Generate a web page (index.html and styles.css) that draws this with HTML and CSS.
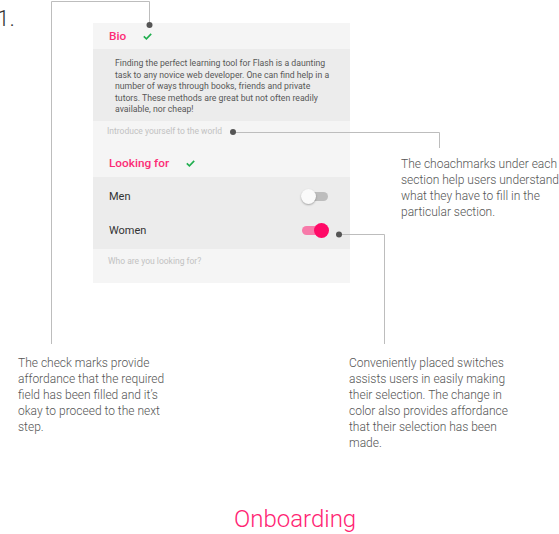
FILE: index.html
```html
<!DOCTYPE html>
<html lang="en">
<head>
<meta charset="utf-8">
<title>Onboarding</title>
<link rel="stylesheet" href="styles.css">
</head>
<body>
<div class="stage">
  <div class="top">
    <div class="num">1.</div>
    <section class="card">
      <div class="sec-head sec-head--bio">
        <span class="sec-title">Bio</span>
        <svg class="check" width="9" height="7" viewBox="0 0 9 7"><polyline points="0.8,3.4 3.4,5.8 8.2,0.9" fill="none" stroke="#1fae4e" stroke-width="1.6"/></svg>
      </div>
      <div class="bio-body">
        <p>Finding the perfect learning tool for Flash is a daunting<br>task to any novice web developer. One can find help in a<br>number of ways through books, friends and private<br>tutors. These methods are great but not often readily<br>available, nor cheap!</p>
      </div>
      <div class="coach coach--bio">Introduce yourself to the world</div>
      <div class="sec-head sec-head--look">
        <span class="sec-title">Looking for</span>
        <svg class="check" width="9" height="7" viewBox="0 0 9 7"><polyline points="0.8,3.4 3.4,5.8 8.2,0.9" fill="none" stroke="#1fae4e" stroke-width="1.6"/></svg>
      </div>
      <div class="options">
        <div class="option"><span class="option-label">Men</span><span class="switch"></span></div>
        <div class="option"><span class="option-label">Women</span><span class="switch switch--on"></span></div>
      </div>
      <div class="coach coach--look">Who are you looking for?</div>
    </section>
    <p class="note note--coach">The choachmarks under each<br>section help users understand<br>what they have to fill in the<br>particular section.</p>
  </div>
  <div class="bottom">
    <p class="note note--check">The check marks provide<br>affordance that the required<br>field has been filled and it’s<br>okay to proceed to the next<br>step.</p>
    <p class="note note--switch">Conveniently placed switches<br>assists users in easily making<br>their selection. The change in<br>color also provides affordance<br>that their selection has been<br>made.</p>
  </div>
  <h1 class="title">Onboarding</h1>
  <svg class="connectors" width="559" height="534" viewBox="0 0 559 534">
    <path d="M51.5 344 V1.5 H149.5 V25" fill="none" stroke="#bdbdbd" stroke-width="1"/>
    <circle cx="149.5" cy="25" r="3" fill="#555"/>
    <path d="M233 132.5 H439.5 V148" fill="none" stroke="#bdbdbd" stroke-width="1"/>
    <circle cx="233" cy="132" r="3" fill="#555"/>
    <path d="M339 234.5 H384.5 V344" fill="none" stroke="#bdbdbd" stroke-width="1"/>
    <circle cx="339" cy="234.5" r="3" fill="#555"/>
  </svg>
</div>
</body>
</html>
```
FILE: styles.css
```css
* { box-sizing: border-box; }
html, body { margin: 0; padding: 0; background: #fff; }
body { font-family: Roboto, "Liberation Sans", sans-serif; color: #333; }

.stage {
  position: relative;
  width: 559px;
  height: 534px;
  overflow: hidden;
}

.top { display: flex; align-items: flex-start; }

.num {
  flex: 0 0 93px;
  margin-top: 5px;
  text-indent: -3px;
  font-size: 22.5px;
  line-height: 26px;
  font-weight: 300;
  color: #333;
}

.card {
  flex: 0 0 257px;
  margin-top: 23px;
  height: 260px;
  background: #f5f5f5;
  display: flex;
  flex-direction: column;
}

.sec-head {
  display: flex;
  align-items: center;
  padding-left: 16px;
}
.sec-head--bio { height: 26px; }
.sec-head--look { height: 36px; padding-top: 8px; }

.sec-title {
  font-size: 11.8px;
  line-height: 16px;
  font-weight: 500;
  color: #fc2c76;
}
.check { display: block; margin-left: 17px; }

.bio-body {
  height: 72px;
  background: #ececec;
  padding: 9px 6px 0 22px;
}
.bio-body p {
  margin: 0;
  font-size: 8.7px;
  line-height: 11.5px;
  color: #585858;
  white-space: nowrap;
}

.coach {
  padding-left: 14px;
  font-size: 8.5px;
  line-height: 12px;
  color: #c2c2c2;
}
.coach--bio { height: 20px; display: flex; align-items: center; }
.coach--look { height: 34px; padding-top: 6px; padding-left: 15px; }

.options {
  height: 72px;
  background: #ececec;
  padding: 2px 0;
}
.option {
  height: 34px;
  display: flex;
  align-items: center;
  justify-content: space-between;
  padding: 0 21px 0 16px;
}
.option-label { font-size: 11px; color: #333; }

.switch {
  position: relative;
  width: 28px;
  height: 15px;
}
.switch::before {
  content: "";
  position: absolute;
  left: 2px;
  right: 1px;
  top: 3px;
  height: 9px;
  border-radius: 5px;
  background: #bdbdbd;
}
.switch::after {
  content: "";
  position: absolute;
  left: 0;
  top: 0;
  width: 15px;
  height: 15px;
  border-radius: 50%;
  background: #fafafa;
  box-shadow: 0 1px 2px rgba(0,0,0,0.3);
}
.switch--on::before { left: 1px; right: 3px; background: #f77aa9; }
.switch--on::after { left: 13px; background: #ff0a67; box-shadow: none; }

.note {
  margin: 0;
  font-size: 12px;
  line-height: 16px;
  font-weight: 300;
  color: #555;
  white-space: nowrap;
}
.note--coach { margin-left: 51px; margin-top: 156px; }

.bottom { display: flex; margin-top: 72px; }
.note--check { flex: 0 0 349px; padding-left: 18px; }

.title {
  margin: 54px 0 0;
  padding-left: 234px;
  font-size: 24px;
  line-height: 28px;
  font-weight: 300;
  color: #ff2473;
}

.connectors {
  position: absolute;
  left: 0;
  top: 0;
  pointer-events: none;
}
```
